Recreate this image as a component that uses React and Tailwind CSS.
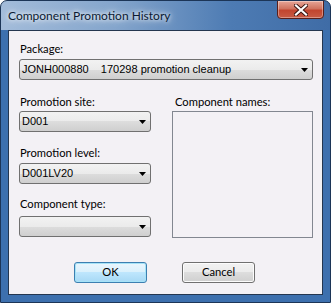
import React from "react";

const labelFont = { fontFamily: "Lato, 'Noto Sans', sans-serif" };

function Arrow() {
  return (
    <svg width="7" height="4" viewBox="0 0 7 4" className="shrink-0">
      <path d="M0 0H7L3.5 4Z" fill="#000" />
    </svg>
  );
}

function Combo({ text, className }) {
  return (
    <div
      className={`h-[21px] rounded-[3px] border border-[#707070] bg-[linear-gradient(#f2f2f2_0%,#ebebeb_50%,#dddddd_50%,#cfcfcf_100%)] flex items-center pl-[2px] pr-[4px] ${className}`}
    >
      <span className="flex-1 whitespace-pre text-[11px] leading-none text-black font-['Liberation_Sans',sans-serif]">
        {text}
      </span>
      <Arrow />
    </div>
  );
}

function Label({ children, className = "" }) {
  return (
    <div className={`h-[15px] text-[11.2px] leading-[15px] text-black ${className}`} style={labelFont}>
      {children}
    </div>
  );
}

export default function App() {
  return (
    <div className="w-[331px] h-[303px] rounded-t-[7px] border border-[#1c3557] bg-[linear-gradient(90deg,#a3bcda_0%,#84a5cc_35%,#4d7bb3_70%,#3f6ca6_100%)] flex flex-col overflow-hidden">
      {/* title bar */}
      <div className="h-[29px] flex items-start justify-between shrink-0 relative">
        <div
          className="pl-[7px] pt-[7px] text-[12px] leading-[15px] text-[#0b1a33] [text-shadow:0_0_8px_#ffffff,0_0_4px_#ffffff]"
          style={labelFont}
        >
          Component Promotion History
        </div>
        <div className="mr-[6px] w-[47px] h-[19px] -mt-px rounded-b-[4px] border border-[#5a1f1a] bg-[linear-gradient(#e7a597_0%,#d0735f_45%,#c2452f_55%,#c85b45_100%)] flex items-center justify-center shadow-[inset_0_0_0_1px_rgba(255,255,255,0.35)]">
          <svg width="14" height="12" viewBox="0 0 14 12">
            <path d="M2 1.5L12 10.5M12 1.5L2 10.5" stroke="#3a1410" strokeWidth="4" strokeLinecap="square" />
            <path d="M2 1.5L12 10.5M12 1.5L2 10.5" stroke="#ffffff" strokeWidth="2.2" strokeLinecap="square" />
          </svg>
        </div>
      </div>
      {/* frame body */}
      <div className="flex-1 bg-[#3d70ae] px-[7px] pb-[7px] flex flex-col">
        <div className="flex-1 border border-[#24364f] bg-[#f3f1f5] pl-[10px] pr-[9px] pt-[10px] flex flex-col">
          <Label className="pl-px">Package:</Label>
          <Combo className="mt-[3px]" text={"JONH000880    170298 promotion cleanup"} />
          <div className="mt-[14px] flex gap-[21px]">
            <div className="w-[132px] flex flex-col">
              <Label className="pl-px">Promotion site:</Label>
              <Combo className="mt-[2px]" text="D001" />
              <Label className="mt-[13px] pl-px">Promotion level:</Label>
              <Combo className="mt-[3px]" text="D001LV20" />
              <Label className="mt-[12px] pl-px">Component type:</Label>
              <Combo className="mt-[5px]" text="" />
            </div>
            <div className="flex-1 flex flex-col">
              <Label className="pl-[3px]">Component names:</Label>
              <div className="mt-[2px] h-[127px] border border-[#828790] bg-[#f3f1f5]" />
            </div>
          </div>
          <div className="mt-[24px] flex pl-[55px] gap-[35px]">
            <div
              className="w-[73px] h-[21px] rounded-[3px] border border-[#3c7fb1] bg-[linear-gradient(#eaf6fd_0%,#d9f0fc_50%,#bee6fd_50%,#a7d9f5_100%)] shadow-[inset_0_0_0_1px_#a6e3f7] flex items-center justify-center text-[11.2px] text-black"
              style={labelFont}
            >
              OK
            </div>
            <div
              className="w-[73px] h-[21px] rounded-[3px] border border-[#707070] bg-[linear-gradient(#f2f2f2_0%,#ebebeb_50%,#dddddd_50%,#cfcfcf_100%)] shadow-[inset_0_0_0_1px_#fcfcfc] flex items-center justify-center text-[11.2px] text-black"
              style={labelFont}
            >
              Cancel
            </div>
          </div>
        </div>
      </div>
    </div>
  );
}
